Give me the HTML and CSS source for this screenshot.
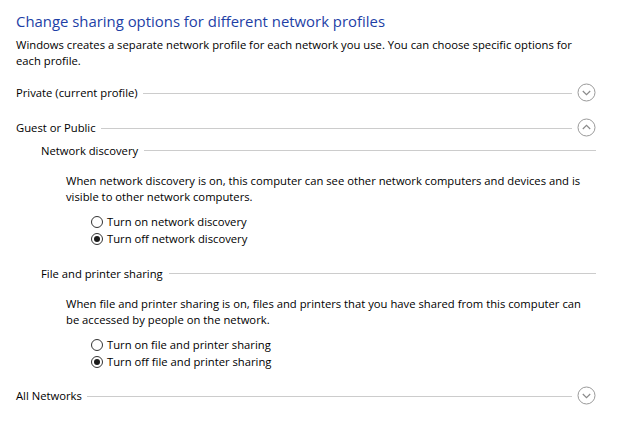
FILE: index.html
```html
<!DOCTYPE html>
<html lang="en">
<head>
<meta charset="utf-8">
<title>Advanced sharing settings</title>
<link rel="stylesheet" href="styles.css">
</head>
<body>
<div class="page">
  <h1 class="title">Change sharing options for different network profiles</h1>
  <p class="desc">Windows creates a separate network profile for each network you use. You can choose specific options for each profile.</p>

  <div class="group-head first">
    <span class="label">Private (current profile)</span>
    <span class="rule"></span>
    <svg class="chev" width="19" height="19" viewBox="0 0 19 19"><circle cx="9.5" cy="9.5" r="8.5" fill="none" stroke="#9a9a9a" stroke-width="1"/><polyline points="5.8,8 9.5,11.6 13.2,8" fill="none" stroke="#8a8a8a" stroke-width="1.2"/></svg>
  </div>

  <div class="group-head open">
    <span class="label">Guest or Public</span>
    <span class="rule"></span>
    <svg class="chev" width="19" height="19" viewBox="0 0 19 19"><circle cx="9.5" cy="9.5" r="8.5" fill="none" stroke="#9a9a9a" stroke-width="1"/><polyline points="5.8,11 9.5,7.4 13.2,11" fill="none" stroke="#8a8a8a" stroke-width="1.2"/></svg>
  </div>

  <div class="sub-head">
    <span class="label">Network discovery</span>
    <span class="rule"></span>
  </div>
  <p class="para">When network discovery is on, this computer can see other network computers and devices and is visible to other network computers.</p>
  <div class="radios">
    <label class="radio"><span class="dot"></span>Turn on network discovery</label>
    <label class="radio"><span class="dot checked"></span>Turn off network discovery</label>
  </div>

  <div class="sub-head second">
    <span class="label">File and printer sharing</span>
    <span class="rule"></span>
  </div>
  <p class="para second">When file and printer sharing is on, files and printers that you have shared from this computer can be accessed by people on the network.</p>
  <div class="radios">
    <label class="radio"><span class="dot"></span>Turn on file and printer sharing</label>
    <label class="radio"><span class="dot checked"></span>Turn off file and printer sharing</label>
  </div>

  <div class="group-head last">
    <span class="label">All Networks</span>
    <span class="rule"></span>
    <svg class="chev" width="19" height="19" viewBox="0 0 19 19"><circle cx="9.5" cy="9.5" r="8.5" fill="none" stroke="#9a9a9a" stroke-width="1"/><polyline points="5.8,8 9.5,11.6 13.2,8" fill="none" stroke="#8a8a8a" stroke-width="1.2"/></svg>
  </div>
</div>
</body>
</html>
```

FILE: styles.css
```css
html, body {
  margin: 0;
  padding: 0;
  background: #ffffff;
}

body {
  font-family: "Open Sans", "Noto Sans", "Liberation Sans", sans-serif;
  font-size: 11.25px;
  color: #000000;
}

.page {
  padding: 10px 21px 0 16px;
  width: 617px;
  box-sizing: border-box;
}

.title {
  margin: 0;
  font-size: 14.9px;
  font-weight: 400;
  line-height: 22px;
  color: #1e3fa6;
}

.desc {
  margin: 5px 0 0 0;
  line-height: 16px;
}

.group-head {
  display: flex;
  align-items: center;
  height: 19px;
  gap: 5px;
}

.group-head.first { margin-top: 14px; }
.group-head.open { margin-top: 16px; }
.group-head.last { margin-top: 16px; }

.rule {
  flex: 1;
  height: 0;
  border-top: 1px solid #cccccc;
  margin-top: 1px;
}

.chev {
  flex: none;
  display: block;
}

.sub-head {
  display: flex;
  align-items: center;
  gap: 6px;
  height: 16px;
  margin: 5px 0 0 25px;
}

.sub-head.second { margin-top: 18px; }

.para {
  margin: 15px 0 0 50px;
  line-height: 16px;
}

.para.second { margin-top: 15px; }

.radios {
  margin: 8px 0 0 75px;
  display: flex;
  flex-direction: column;
}

.radio {
  display: flex;
  align-items: center;
  gap: 4px;
  height: 17px;
}

.dot {
  width: 12px;
  height: 12px;
  box-sizing: border-box;
  border: 1px solid #333333;
  border-radius: 50%;
  display: flex;
  align-items: center;
  justify-content: center;
  flex: none;
}

.dot.checked::after {
  content: "";
  width: 6px;
  height: 6px;
  border-radius: 50%;
  background: #1a1a1a;
}
```
